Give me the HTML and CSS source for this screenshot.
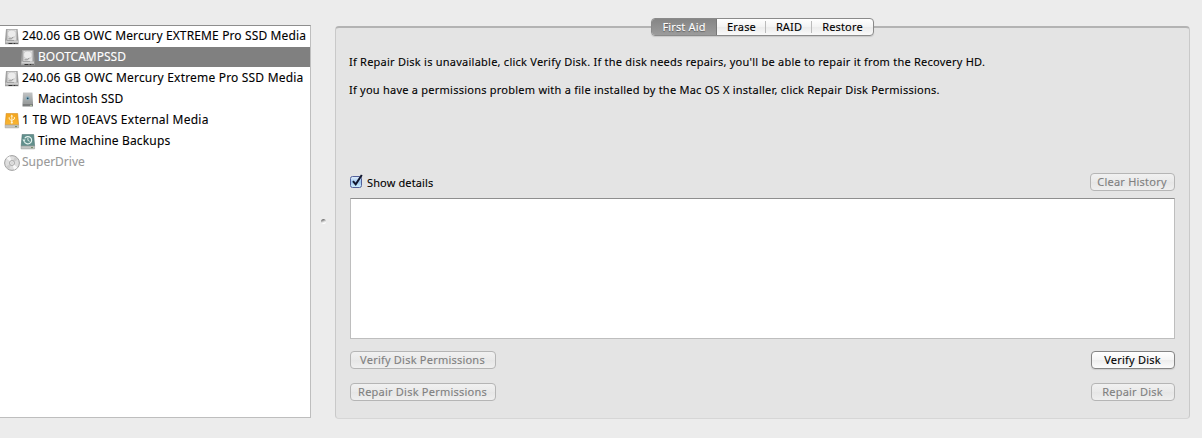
FILE: index.html
```
<!DOCTYPE html>
<html lang="en">
<head>
    <meta charset="UTF-8">
    <meta name="viewport" content="width=device-width, initial-scale=1.0">
    <title>Disk Utility</title>
    <link rel="stylesheet" href="styles.css">
</head>
<body>

    <!-- Shared icon drawings -->
    <svg class="defs" width="0" height="0">
        <defs>
            <linearGradient id="silver" x1="0" y1="0" x2="1" y2="0">
                <stop offset="0" stop-color="#8c8c8c"/>
                <stop offset="0.2" stop-color="#dadada"/>
                <stop offset="0.8" stop-color="#e4e4e4"/>
                <stop offset="1" stop-color="#8c8c8c"/>
            </linearGradient>
            <linearGradient id="gray" x1="0" y1="0" x2="0" y2="1">
                <stop offset="0" stop-color="#c3c5c6"/>
                <stop offset="1" stop-color="#989c9c"/>
            </linearGradient>
            <linearGradient id="orange" x1="0" y1="0" x2="0" y2="1">
                <stop offset="0" stop-color="#f3a51d"/>
                <stop offset="1" stop-color="#f9b634"/>
            </linearGradient>
            <symbol id="drive" viewBox="0 0 16 16">
                <path d="M2 0h11.6l1 11.5v3.7H1v-3.7z" fill="#a2a2a2"/>
                <path d="M2.6 .7h10.3l.9 10.8h-12z" fill="url(#silver)"/>
                <ellipse cx="7.8" cy="4.9" rx="4.2" ry="3.8" fill="#ececec" stroke="#bcbcbc" stroke-width=".6"/>
                <path d="M4.5 9.8h2.8l2-1.7" fill="none" stroke="#8a8a8a" stroke-width=".9"/>
                <path d="M1.6 11.6h12.4v2H1.6z" fill="#cfcfcf"/>
                <path d="M3 11.5h7" stroke="#999" stroke-width=".8"/>
                <path d="M4.5 14.5h9" stroke="#333" stroke-width="1.1" stroke-dasharray="4 1 2 1"/>
            </symbol>
            <symbol id="volume" viewBox="0 0 16 16">
                <path d="M3 .5h9.4l.6 10.8H2.5z" fill="url(#gray)"/>
                <path d="M2.5 11.3H13v3.2H2.5z" fill="#7b7d7d"/>
                <path d="M10.3 13.4h1.5" stroke="#c5dcae" stroke-width="1"/>
                <circle cx="7.7" cy="6.3" r="2" fill="#8fb0bf"/>
                <circle cx="7.7" cy="6.3" r=".9" fill="#1f4d66"/>
            </symbol>
            <symbol id="usb" viewBox="0 0 16 16">
                <path d="M2.2 .4h11.4l1 11.4H1.2z" fill="url(#orange)" stroke="#d58a18" stroke-width=".6"/>
                <path d="M1.1 12h13.5v2.9H1.1z" fill="#c6c5c0" stroke="#a2a19b" stroke-width=".5"/>
                <path d="M7.8 3v7M5.2 4.2v1.8l2.6 1.8M10.4 4v2L7.8 7.4" fill="none" stroke="#fff6dc" stroke-width=".9"/>
                <path d="M6.4 3.6l1.4-2 1.4 2z" fill="#fff6dc"/>
                <circle cx="7.8" cy="9.6" r="1.1" fill="#fff6dc"/>
                <path d="M11 13.6h2" stroke="#6d8c5b" stroke-width="1"/>
            </symbol>
            <symbol id="timemachine" viewBox="0 0 16 16">
                <path d="M2.2 .4h11.4l1 11.4H1.2z" fill="#62908d" stroke="#4b716f" stroke-width=".6"/>
                <path d="M1.1 12h13.5v2.9H1.1z" fill="#c3c5c4" stroke="#8f9491" stroke-width=".5"/>
                <path d="M4.3 7.5a3.8 3.6 0 1 0 .4-3.3" fill="none" stroke="#e6f4f0" stroke-width="1.1"/>
                <path d="M2.4 5.6h3.2L4 8z" fill="#e6f4f0"/>
                <path d="M7.9 3.9v2.5l1.7.9" fill="none" stroke="#e6f4f0" stroke-width=".9"/>
                <path d="M11 13.6h2" stroke="#6d8c5b" stroke-width="1"/>
            </symbol>
            <symbol id="disc" viewBox="0 0 16 16">
                <circle cx="8" cy="8" r="7.4" fill="#dedede" stroke="#969696" stroke-width=".9"/>
                <path d="M8 8L2.5 3.5A7 7 0 0 1 6 1.3zM8 8l5.5 4.5a7 7 0 0 1-3.5 2.2z" fill="#f8f8f8"/>
                <path d="M8 8l3-6.3a7 7 0 0 1 3 2.8zM8 8l-3 6.3a7 7 0 0 1-3-2.8z" fill="#cdcdcd"/>
                <circle cx="8" cy="8" r="2.5" fill="#f1f1f1" stroke="#999" stroke-width=".8"/>
                <circle cx="8" cy="8" r="1" fill="#fff" stroke="#aaa" stroke-width=".5"/>
            </symbol>
        </defs>
    </svg>

    <div class="window">
        <ul class="disks">
            <li><svg class="icon"><use href="#drive"/></svg><span class="name owc-upper">240.06 GB OWC Mercury EXTREME Pro SSD Media</span></li>
            <li class="volume selected"><svg class="icon"><use href="#drive"/></svg><span class="name">BOOTCAMPSSD</span></li>
            <li><svg class="icon"><use href="#drive"/></svg><span class="name owc">240.06 GB OWC Mercury Extreme Pro SSD Media</span></li>
            <li class="volume"><svg class="icon"><use href="#volume"/></svg><span class="name macintosh">Macintosh SSD</span></li>
            <li><svg class="icon"><use href="#usb"/></svg><span class="name external">1 TB WD 10EAVS External Media</span></li>
            <li class="volume"><svg class="icon"><use href="#timemachine"/></svg><span class="name backups">Time Machine Backups</span></li>
            <li class="disabled"><svg class="icon"><use href="#disc"/></svg><span class="name">SuperDrive</span></li>
        </ul>

        <div class="splitter"><span class="dimple"></span></div>

        <div class="panel">
            <div class="tabs">
                <button class="tab first-aid active">First Aid</button>
                <button class="tab erase">Erase</button>
                <button class="tab raid">RAID</button>
                <button class="tab restore">Restore</button>
            </div>

            <div class="help">
                <p>If Repair Disk is unavailable, click Verify Disk. If the disk needs repairs, you'll be able to repair it from the Recovery HD.</p>
                <p>If you have a permissions problem with a file installed by the Mac OS X installer, click Repair Disk Permissions.</p>
            </div>

            <div class="row details">
                <label class="show-details">
                    <svg class="checkbox" width="14" height="14" viewBox="0 0 14 14">
                        <defs>
                            <linearGradient id="aqua" x1="0" y1="0" x2="0" y2="1">
                                <stop offset="0" stop-color="#e4effb"/>
                                <stop offset="0.5" stop-color="#9fc8f0"/>
                                <stop offset="1" stop-color="#d2f2ff"/>
                            </linearGradient>
                        </defs>
                        <rect x=".5" y="2.5" width="11" height="11" rx="2" fill="url(#aqua)" stroke="#52609a"/>
                        <path d="M3 7.2l2.7 3.2L11.8 1" fill="none" stroke="#10162e" stroke-width="2"/>
                    </svg>
                    <span>Show details</span>
                </label>
                <button class="btn clear" disabled>Clear History</button>
            </div>

            <div class="log"></div>

            <div class="row verify">
                <button class="btn wide" disabled>Verify Disk Permissions</button>
                <button class="btn">Verify Disk</button>
            </div>
            <div class="row repair">
                <button class="btn wide" disabled>Repair Disk Permissions</button>
                <button class="btn" disabled>Repair Disk</button>
            </div>
        </div>
    </div>

</body>
</html>
```
FILE: styles.css
```
* {
    box-sizing: border-box;
}

body {
    margin: 0;
    background-color: #ececec;
    color: #000;
    font-family: "Lucida Grande", "Noto Sans", "Open Sans", sans-serif;
    font-size: 11px;
    -webkit-text-stroke: 0.1px;
    overflow: hidden;
}

.defs {
    display: block;
}

.window {
    display: flex;
    height: 438px;
    padding: 25px 12px 20px 0;
}

/* Disk list */
.disks {
    width: 311px;
    height: 393px;
    margin: 0;
    padding: 0;
    list-style: none;
    background-color: #fff;
    border: 1px solid #bebebe;
    border-top-color: #8e8e8e;
    border-left: none;
}

.disks li {
    display: flex;
    align-items: center;
    height: 20px;
    margin-bottom: 1px;
    padding-left: 4px;
    font-size: 12px;
    white-space: nowrap;
}

.disks li.volume {
    padding-left: 20px;
}

.disks li.selected {
    background-color: #808080;
    color: #fff;
}

.disks li.disabled {
    color: #999;
}

.name {
    padding-bottom: 2px;
}

.owc-upper { letter-spacing: 0.13px; }
.owc { letter-spacing: 0.19px; }
.macintosh { letter-spacing: 0.12px; }
.external { letter-spacing: 0.25px; }
.backups { letter-spacing: 0.15px; }

.icon {
    width: 16px;
    height: 16px;
    margin-right: 2px;
    margin-top: 2px;
    flex: none;
}

/* Splitter between list and panel */
.splitter {
    display: flex;
    justify-content: center;
    width: 24px;
    padding-top: 194px;
}

.dimple {
    width: 5px;
    height: 5px;
    border-radius: 50%;
    background: linear-gradient(160deg, #777 20%, #ddd 55%, #fff 80%);
}

/* Main panel */
.panel {
    width: 855px;
    height: 393px;
    margin-top: 1px;
    padding: 0 14px;
    background-color: #e4e4e4;
    border: 1px solid #c9c9c9;
    border-top: 2px solid #b3b3b3;
    border-bottom-color: #d6d6d6;
    border-radius: 4px;
    letter-spacing: 0.24px;
}

.tabs {
    display: flex;
    width: 223px;
    height: 18px;
    margin: -10px auto 0;
    border: 1px solid #8a8a8a;
    border-radius: 4px;
    background: linear-gradient(#fff, #f3f3f3 50%, #ebebeb 51%, #fafafa);
    box-shadow: 0 1px 1px rgba(0, 0, 0, 0.12);
}

.tab {
    padding: 0;
    border: none;
    background: none;
    color: #000;
    font: inherit;
    letter-spacing: 0.15px;
    line-height: 16px;
    text-align: center;
    white-space: nowrap;
}

.tab.erase,
.tab.raid {
    background: linear-gradient(#bbb, #bbb) right 2px / 1px 12px no-repeat;
}

.tab.active {
    border-right: 1px solid #777;
    border-radius: 3px 0 0 3px;
    background: linear-gradient(#858585, #929292 60%, #9c9c9c);
    color: #fff;
    text-shadow: 0 1px 1px rgba(0, 0, 0, 0.4);
}

.first-aid { width: 65px; }
.erase { width: 49px; }
.raid { width: 46px; }
.restore { width: 61px; }

.help {
    height: 137px;
    padding-top: 18px;
}

.help p {
    margin: 0 0 12px -1px;
    line-height: 16px;
    white-space: nowrap;
}

.row {
    display: flex;
    justify-content: space-between;
}

.details {
    height: 25px;
}

.show-details {
    display: flex;
    height: 19px;
    letter-spacing: 0.13px;
    line-height: 19px;
}

.checkbox {
    margin: 1px 3px 0 0;
}

.btn {
    width: 84px;
    height: 18px;
    padding: 0 1px 1px 0;
    border: 1px solid #858585;
    border-radius: 4px;
    background: linear-gradient(#fff, #f5f5f5 50%, #ededed 51%, #fbfbfb);
    box-shadow: 0 1px 1px rgba(0, 0, 0, 0.1);
    color: #000;
    font: inherit;
    letter-spacing: 0.22px;
    line-height: 15px;
    white-space: nowrap;
}

.btn.wide {
    width: 146px;
}

.btn.clear {
    width: 85px;
}

.btn:disabled {
    border-color: #b5b5b5;
    background: linear-gradient(#f1f1f1, #e9e9e9 50%, #e6e6e6 51%, #efefef);
    box-shadow: none;
    color: #808080;
}

.log {
    height: 141px;
    background-color: #fff;
    border: 1px solid #bebebe;
    border-top-color: #8e8e8e;
}

.verify {
    margin-top: 12px;
}

.repair {
    margin-top: 14px;
}
```
